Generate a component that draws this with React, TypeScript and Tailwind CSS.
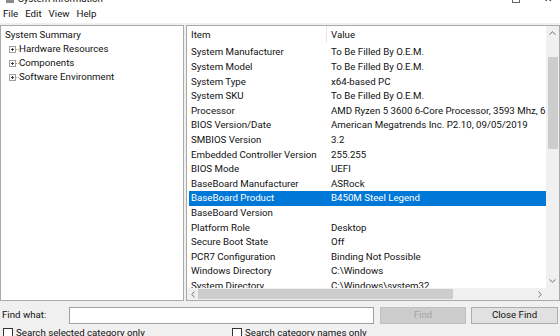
import React from "react";

const rows: [string, string][] = [
  ["System Manufacturer", "To Be Filled By O.E.M."],
  ["System Model", "To Be Filled By O.E.M."],
  ["System Type", "x64-based PC"],
  ["System SKU", "To Be Filled By O.E.M."],
  ["Processor", "AMD Ryzen 5 3600 6-Core Processor, 3593 Mhz, 6 Core(s), 12 Logical Processor(s)"],
  ["BIOS Version/Date", "American Megatrends Inc. P2.10, 09/05/2019"],
  ["SMBIOS Version", "3.2"],
  ["Embedded Controller Version", "255.255"],
  ["BIOS Mode", "UEFI"],
  ["BaseBoard Manufacturer", "ASRock"],
  ["BaseBoard Product", "B450M Steel Legend"],
  ["BaseBoard Version", ""],
  ["Platform Role", "Desktop"],
  ["Secure Boot State", "Off"],
  ["PCR7 Configuration", "Binding Not Possible"],
  ["Windows Directory", "C:\\Windows"],
  ["System Directory", "C:\\Windows\\system32"],
];

function PlusBox() {
  return (
    <div className="flex items-center w-[10px] shrink-0 ml-[8px]">
      <div className="w-[7px] h-[7px] border border-[#a0a0a0] bg-white flex items-center justify-center relative shrink-0">
        <div className="absolute w-[3px] h-[1px] bg-[#404040]" />
        <div className="absolute w-[1px] h-[3px] bg-[#404040]" />
      </div>
      <div className="w-[3px] border-t border-dotted border-[#a0a0a0]" />
    </div>
  );
}

export default function App() {
  return (
    <div
      className="w-[560px] h-[336px] overflow-hidden bg-[#f0f0f0] flex flex-col text-[9.7px] text-[#111]"
      style={{ fontFamily: 'Roboto, "Noto Sans", sans-serif' }}
    >
      {/* title strip (cut off) */}
      <div className="h-[5px] bg-white overflow-hidden">
        <div className="flex items-center gap-[4px] pl-[6px] mt-[-7px]">
          <div className="w-[8px] h-[8px] bg-[#8a8a8a]" />
          <span className="leading-[12px]">System Information</span>
          <div className="flex-1" />
          <div className="w-[8px] h-[7px] border border-[#666] mr-[20px]" />
          <span className="mr-[8px] leading-[12px]">✕</span>
        </div>
      </div>
      {/* menu */}
      <div className="h-[20px] bg-white flex items-center pl-[3px] gap-[7px] pt-[1px]">
        <span>File</span>
        <span>Edit</span>
        <span>View</span>
        <span>Help</span>
      </div>
      {/* main */}
      <div className="flex h-[278px] pt-[2px] gap-[2px]">
        <div className="w-[184px] bg-white border border-[#a9a9a9] pt-[2px] leading-[14px]">
          <div className="pl-[4px]">System Summary</div>
          {["Hardware Resources", "Components", "Software Environment"].map((t) => (
            <div key={t} className="flex items-center">
              <PlusBox />
              <span>{t}</span>
            </div>
          ))}
        </div>
        <div className="flex-1 bg-white border border-[#a9a9a9] flex flex-col overflow-hidden">
          <div className="flex flex-1 min-h-0">
            <div className="flex-1 min-w-0 overflow-hidden flex flex-col">
              <div className="h-[17px] shrink-0 grid grid-cols-[135px_1fr] items-center pl-[4px]">
                <span>Item</span>
                <div className="flex h-full items-center">
                  <div className="w-[1px] h-full bg-[#e5e5e5] mr-[4px]" />
                  <span>Value</span>
                </div>
              </div>
              <div className="pl-[2px] pt-[2px] overflow-hidden">
                {rows.map(([k, v]) => {
                  const sel = k === "BaseBoard Product";
                  return (
                    <div
                      key={k}
                      className={
                        "h-[14.6px] grid grid-cols-[140px_1fr] items-center pl-[2px] whitespace-nowrap " +
                        (sel ? "bg-[#0078d7] text-white" : "")
                      }
                    >
                      <span className="overflow-hidden">{k}</span>
                      <span className="overflow-hidden">{v}</span>
                    </div>
                  );
                })}
              </div>
            </div>
            {/* vertical scrollbar */}
            <div className="w-[13px] bg-[#f0f0f0] flex flex-col items-center">
              <div className="h-[14px] flex items-center justify-center">
                <svg width="7" height="4" viewBox="0 0 7 4"><path d="M0.5 3.5 L3.5 0.8 L6.5 3.5" stroke="#707070" fill="none" strokeWidth="1" /></svg>
              </div>
              <div className="h-[17px]" />
              <div className="w-[10px] h-[92px] bg-[#cdcdcd]" />
              <div className="flex-1" />
              <div className="h-[14px] flex items-center justify-center">
                <svg width="7" height="4" viewBox="0 0 7 4"><path d="M0.5 0.5 L3.5 3.2 L6.5 0.5" stroke="#707070" fill="none" strokeWidth="1" /></svg>
              </div>
            </div>
          </div>
          {/* horizontal scrollbar */}
          <div className="h-[12px] flex bg-[#f0f0f0] shrink-0">
            <div className="flex-1 flex items-center">
              <div className="w-[11px] flex items-center justify-center">
                <svg width="4" height="7" viewBox="0 0 4 7"><path d="M3.5 0.5 L0.8 3.5 L3.5 6.5" stroke="#707070" fill="none" strokeWidth="1" /></svg>
              </div>
              <div className="w-[255px] h-[10px] bg-[#cdcdcd]" />
              <div className="flex-1" />
              <div className="w-[12px] flex items-center justify-center">
                <svg width="4" height="7" viewBox="0 0 4 7"><path d="M0.5 0.5 L3.2 3.5 L0.5 6.5" stroke="#707070" fill="none" strokeWidth="1" /></svg>
              </div>
            </div>
            <div className="w-[13px] bg-[#f0f0f0]" />
          </div>
        </div>
      </div>
      {/* find bar */}
      <div className="flex items-center h-[26px] pt-[4px] pl-[2px]">
        <span className="w-[67px]">Find what:</span>
        <div className="w-[305px] h-[17px] bg-white border border-[#a0a0a0]" />
        <div className="ml-[6px] w-[86px] h-[17px] bg-[#cccccc] border border-[#bfbfbf] flex items-center justify-center text-[#a3a3a3]">
          Find
        </div>
        <div className="ml-[5px] w-[87px] h-[17px] bg-[#e1e1e1] border border-[#adadad] flex items-center justify-center">
          Close Find
        </div>
      </div>
      <div className="flex items-start h-[10px] pl-[3px] pt-[1px]">
        <div className="flex items-center w-[229px]">
          <div className="w-[10px] h-[10px] border border-[#333] bg-white mr-[3px]" />
          <span className="leading-[12px]">Search selected category only</span>
        </div>
        <div className="flex items-center">
          <div className="w-[10px] h-[10px] border border-[#333] bg-white mr-[3px]" />
          <span className="leading-[12px]">Search category names only</span>
        </div>
      </div>
    </div>
  );
}
